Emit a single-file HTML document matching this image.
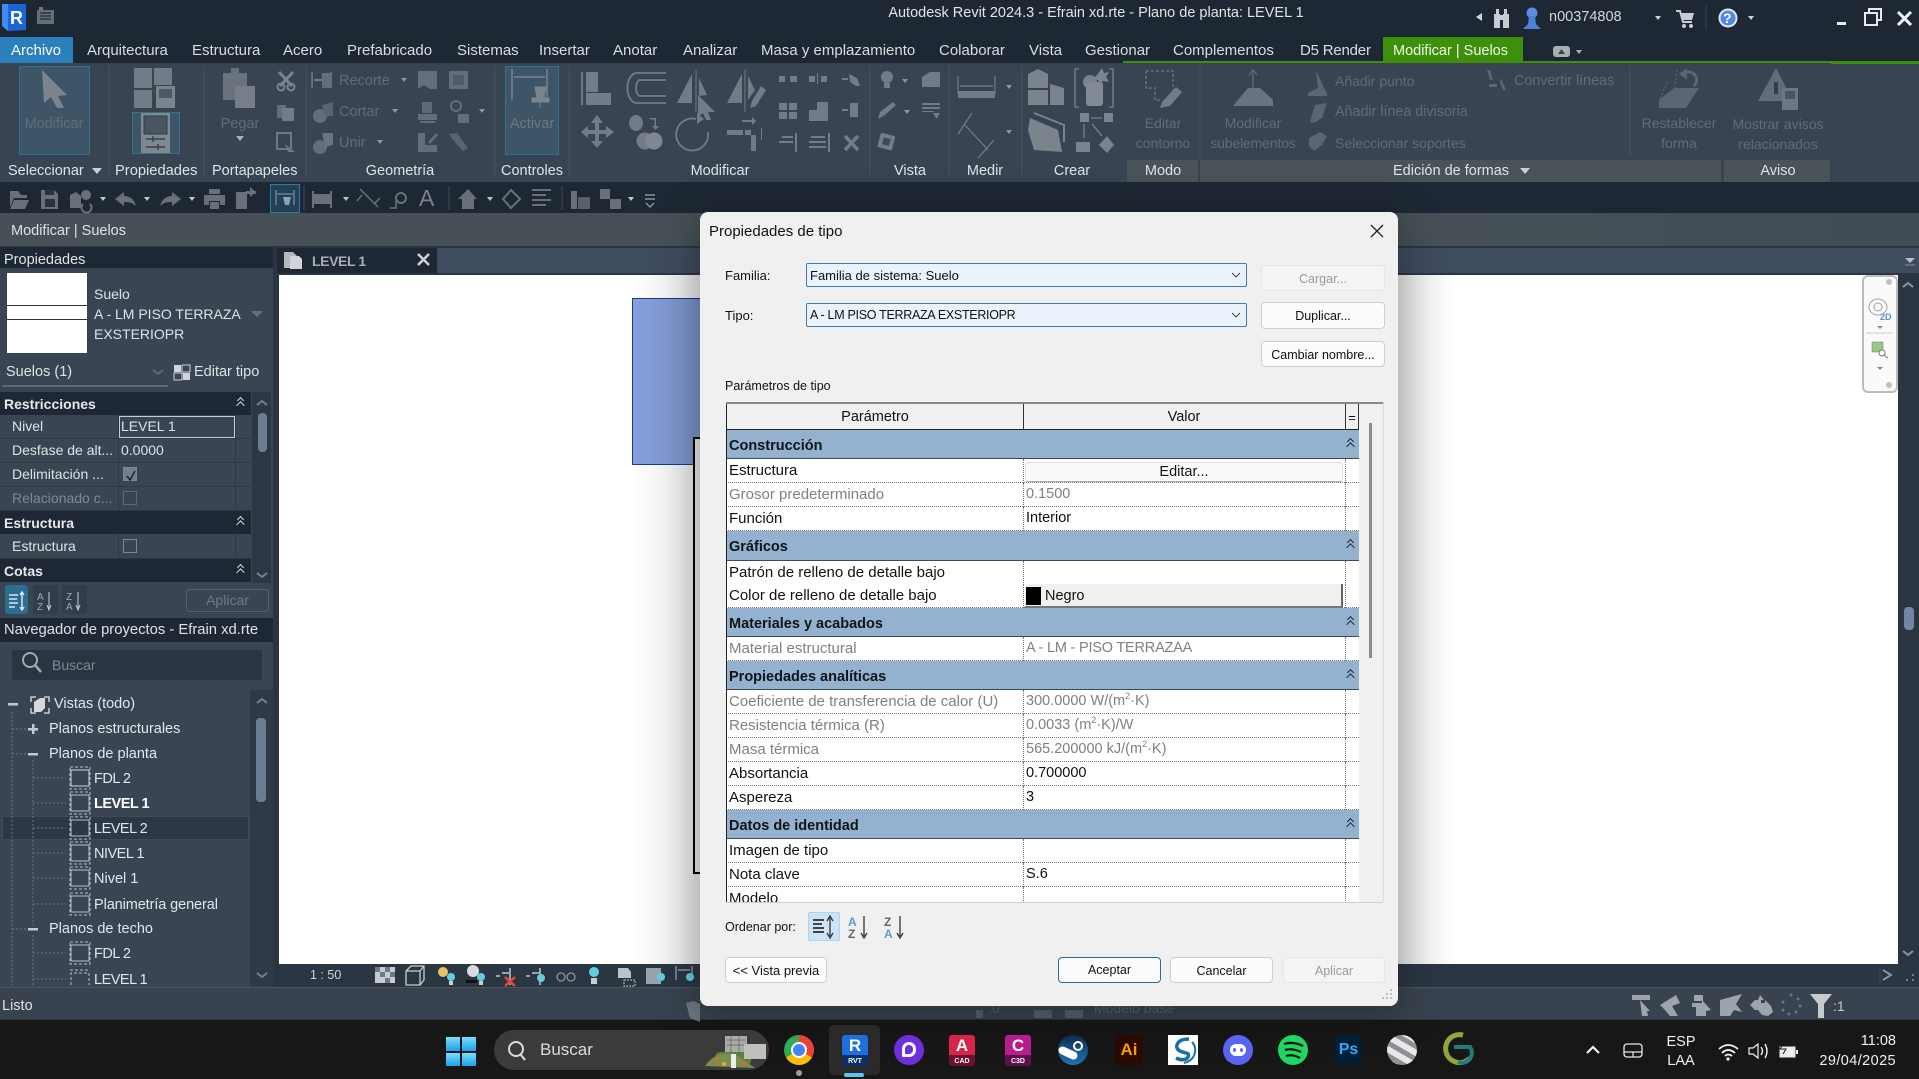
<!DOCTYPE html>
<html lang="es"><head><meta charset="utf-8"><title>Autodesk Revit</title>
<style>
*{box-sizing:border-box}
html,body{margin:0;padding:0;width:1919px;height:1079px;overflow:hidden;background:#1e2834;font-family:"Liberation Sans",sans-serif;color:#e6e8ea}
.b{position:absolute}
.t{position:absolute;white-space:nowrap;height:20px;line-height:20px;font-size:14px}
.c{transform:translateX(-50%)}
.m{font-size:15px;color:#d9dde0}
.d{color:#616c78}
.l{color:#dfe2e4;font-size:14.5px}
svg{position:absolute;left:0;top:0}
#dlg{position:absolute;left:700px;top:212px;width:698px;height:794px;background:#f0f0f0;border-radius:8px;box-shadow:0 6px 40px 4px rgba(0,0,0,.3);color:#000;overflow:hidden}
#dlg .t{font-size:13px;color:#111}
.btn{position:absolute;background:#fbfbfb;border:1px solid #cfcfcf;border-radius:4px;text-align:center;font-size:12.5px;color:#111;white-space:nowrap}
.dis{background:#f4f4f4;border-color:#e6e6e6;color:#9a9a9a}
.cb{position:absolute;left:106px;width:441px;height:24px;border:1px solid #3d7eab;border-radius:2px;background:#eaf3fb;font-size:13px;line-height:23px;padding-left:3px;color:#111}
.g{position:absolute;left:26px;width:633px;background:#94b2cf;border-bottom:1px solid #3e4b57;font-weight:bold;font-size:14.5px;padding:8px 0 0 3px;line-height:17px;color:#101418}
.g i,.ph i{position:absolute;right:6px;top:9px;width:5px;height:5px;border-left:1.5px solid #222;border-top:1.5px solid #222;transform:rotate(45deg)}
.g i:after,.ph i:after{content:"";position:absolute;left:1.5px;top:1.5px;width:5px;height:5px;border-left:1.5px solid #222;border-top:1.5px solid #222}
.r{position:absolute;left:26px;width:633px;height:24px;background:#fff;border-bottom:1px dotted #777;font-size:15px;line-height:23px;color:#111}
.r s{position:absolute;text-decoration:none;left:3px;top:0;white-space:nowrap}
.r u{position:absolute;text-decoration:none;left:300px;top:0;white-space:nowrap;font-size:14.5px}
.r:after{content:"";position:absolute;left:297px;top:0;bottom:-1px;border-left:1px dotted #777}
.r:before{content:"";position:absolute;left:619px;top:0;bottom:-1px;border-left:1px dotted #777}
.gr{color:#808080}
sup{font-size:9px;line-height:0}
.p{position:absolute;left:0;width:251px;height:24px;background:#3a4554;border-bottom:1px solid #2e3845;font-size:14px;line-height:23px;color:#dfe2e4}
.p s{position:absolute;text-decoration:none;left:12px;white-space:nowrap}
.p u{position:absolute;text-decoration:none;left:121px;white-space:nowrap}
.p:after{content:"";position:absolute;left:118px;top:0;bottom:0;border-left:1px solid #2e3845}
.p:before{content:"";position:absolute;left:235px;top:0;bottom:0;border-left:1px solid #2e3845}
.ph{position:absolute;left:0;width:251px;height:23px;background:#1e2834;font-weight:bold;font-size:14px;line-height:24px;padding-left:4px;color:#e6e8ea}
.ph i{left:238px;right:auto;top:6px;border-color:#dfe2e4}
.ph i:after{border-color:#dfe2e4}
.ck{position:absolute;left:123px;top:4px;width:14px;height:14px;border:1px solid #7d8793}
.tr{position:absolute;font-size:14.5px;height:20px;line-height:20px;color:#e3e6e8;white-space:nowrap}
.cap{letter-spacing:-.5px}
.ti{position:absolute;width:30px;height:30px;top:1035px;text-align:center;font-weight:bold}
</style></head><body>

<!-- BASE REGIONS -->
<div class="b" style="left:0;top:0;width:1919px;height:62px;background:#1e2834"></div>
<div class="b" style="left:0;top:37px;width:73px;height:26px;background:#2a7fbd"></div>
<div class="b" style="left:1383px;top:37px;width:140px;height:26px;background:#3c9109"></div>
<div class="b" style="left:1123px;top:61px;width:796px;height:3px;background:#3c9109"></div>
<div class="b" style="left:0;top:63px;width:1831px;height:119px;background:#394453"></div>
<div class="b" style="left:1831px;top:64px;width:88px;height:118px;background:#394453"></div>
<div class="b" style="left:1127px;top:160px;width:71px;height:22px;background:#495358"></div>
<div class="b" style="left:1200px;top:160px;width:521px;height:22px;background:#495358"></div>
<div class="b" style="left:1724px;top:160px;width:106px;height:22px;background:#495358"></div>
<div class="b" style="left:0;top:182px;width:1919px;height:31px;background:#1e2834"></div>
<div class="b" style="left:0;top:213px;width:1919px;height:33px;background:linear-gradient(90deg,#465056 0,#465056 75%,#3f4c55 100%)"></div>
<div class="b" style="left:0;top:246px;width:1919px;height:742px;background:#2b3542"></div>
<!-- tab strip -->
<div class="b" style="left:277px;top:248px;width:1642px;height:25px;background:#3f4b5e"></div>
<div class="b" style="left:277px;top:248px;width:160px;height:25px;background:#1e2834"></div>
<!-- canvas -->
<div class="b" style="left:279px;top:275px;width:1619px;height:689px;background:#fff"></div>
<div class="b" style="left:632px;top:298px;width:90px;height:167px;background:#86a0dc;border:1px solid #1d3a8f"></div>
<div class="b" style="left:693px;top:437px;width:40px;height:437px;background:#fff;border:2px solid #000"></div>
<!-- view bar -->
<div class="b" style="left:279px;top:964px;width:1619px;height:22px;background:#2b3643"></div>
<div class="b" style="left:1898px;top:964px;width:21px;height:22px;background:#2b3643"></div>
<!-- status bar -->
<div class="b" style="left:0;top:987px;width:1919px;height:33px;background:#39434f;border-top:1px solid #4a5563;border-bottom:1px solid #2a323c"></div>
<!-- taskbar -->
<div class="b" style="left:0;top:1020px;width:1919px;height:59px;background:#171717"></div>
<!-- scroll right -->
<div class="b" style="left:1904px;top:607px;width:10px;height:23px;background:#7286a3;border-radius:4px"></div>

<!-- LEFT PANEL -->
<div class="b" style="left:0;top:247px;width:273px;height:740px;background:#3a4554"></div>
<div class="b" style="left:0;top:247px;width:273px;height:21px;background:#1e2834"></div>
<div class="t" style="left:4px;top:250px;color:#dfe2e4;font-size:14.5px">Propiedades</div>
<div class="b" style="left:7px;top:273px;width:80px;height:80px;background:#fff"></div>
<div class="b" style="left:7px;top:305px;width:80px;height:1px;background:#333"></div>
<div class="b" style="left:7px;top:319px;width:80px;height:1px;background:#333"></div>
<div class="t l" style="left:94px;top:284px;font-size:14px">Suelo</div>
<div class="t l" style="left:94px;top:304px;font-size:14px">A - LM PISO TERRAZA</div>
<div class="t l" style="left:94px;top:324px;font-size:14px">EXSTERIOPR</div>
<div class="t" style="left:6px;top:362px;color:#dfe2e4;font-size:14.5px">Suelos (1)</div>
<div class="b" style="left:2px;top:385px;width:166px;height:2px;background:#5b6776"></div>
<div class="t" style="left:194px;top:362px;color:#dfe2e4;font-size:14.5px">Editar tipo</div>

<div class="ph" style="top:392px">Restricciones<i></i></div>
<div class="p" style="top:415px"><s>Nivel</s><u>LEVEL 1</u></div>
<div class="b" style="left:119px;top:416px;width:116px;height:22px;border:1px solid #c8ccd0"></div>
<div class="p" style="top:439px"><s>Desfase de alt...</s><u>0.0000</u></div>
<div class="p" style="top:463px"><s>Delimitación ...</s><span class="ck" style="background:#76808c"></span></div>
<div class="p" style="top:487px"><s style="color:#7f8893">Relacionado c...</s><span class="ck" style="border-color:#5d6875"></span></div>
<div class="ph" style="top:511px">Estructura<i></i></div>
<div class="p" style="top:535px"><s>Estructura</s><span class="ck"></span></div>
<div class="ph" style="top:559px">Cotas<i></i></div>
<div class="b" style="left:252px;top:392px;width:19px;height:191px;background:#2d3744"></div>
<div class="b" style="left:258px;top:413px;width:9px;height:39px;background:#6b7c94;border-radius:4px"></div>
<div class="b" style="left:5px;top:585px;width:23px;height:29px;background:#2c6d92;border-radius:3px"></div>
<div class="b" style="left:33px;top:585px;width:25px;height:29px;background:#323d4b"></div>
<div class="b" style="left:62px;top:585px;width:25px;height:29px;background:#323d4b"></div>
<div class="b" style="left:186px;top:589px;width:83px;height:23px;border:1px solid #55606d;border-radius:4px;text-align:center;font-size:14px;line-height:21px;color:#6f7985">Aplicar</div>

<div class="b" style="left:0;top:618px;width:273px;height:24px;background:#1e2834"></div>
<div class="t" style="left:4px;top:620px;color:#dfe2e4;font-size:14.8px">Navegador de proyectos - Efrain xd.rte</div>
<div class="b" style="left:12px;top:650px;width:250px;height:30px;background:#2b3541"></div>
<div class="t" style="left:52px;top:655px;color:#7f8893;font-size:14px">Buscar</div>
<div class="b" style="left:250px;top:690px;width:23px;height:297px;background:#2f3a47"></div>
<div class="b" style="left:256px;top:718px;width:10px;height:84px;background:#6b7c94;border-radius:4px"></div>
<div class="b" style="left:2px;top:816px;width:247px;height:24px;background:#2d3846;border:1px solid #3f4a58"></div>
<div class="b" style="left:0;top:690px;width:250px;height:296px;overflow:hidden">
 <div class="tr" style="left:54px;top:4px">Vistas (todo)</div>
 <div class="tr" style="left:49px;top:29px">Planos estructurales</div>
 <div class="tr" style="left:49px;top:54px">Planos de planta</div>
 <div class="tr cap" style="left:94px;top:79px">FDL 2</div>
 <div class="tr cap" style="left:94px;top:104px;font-weight:bold;color:#fff">LEVEL 1</div>
 <div class="tr cap" style="left:94px;top:129px">LEVEL 2</div>
 <div class="tr cap" style="left:94px;top:154px">NIVEL 1</div>
 <div class="tr" style="left:94px;top:179px">Nivel 1</div>
 <div class="tr" style="left:94px;top:205px;letter-spacing:-.1px">Planimetría general</div>
 <div class="tr" style="left:49px;top:229px">Planos de techo</div>
 <div class="tr cap" style="left:94px;top:254px">FDL 2</div>
 <div class="tr cap" style="left:94px;top:280px">LEVEL 1</div>
</div>

<!-- ICON LAYER -->
<svg width="1919" height="1079" viewBox="0 0 1919 1079">
<!-- title icons -->
<path d="M2 4H26V30L8 31L2 26Z" fill="#1a66d8"/><path d="M2 4H8V31L2 26Z" fill="#3f8cf0"/>
<text x="10" y="24" font-family="Liberation Sans,sans-serif" font-size="18" font-weight="bold" fill="#fff">R</text>
<rect x="37" y="10" width="17" height="14" fill="#666e78"/><rect x="39" y="7" width="4" height="3" fill="#777"/><path d="M40 13H51M40 16H51M40 19H51" stroke="#2b333d" stroke-width="1.500"/>
<!-- panels separators -->
<g stroke="#475261" stroke-width="1"><path d="M109 66V178M204 66V178M306 66V178M495 66V178M569 66V178M870 66V178M949 66V178M1022 66V178M1200 66V158M1630 66V156"/></g>
<!-- Modificar btn -->
<rect x="19.500" y="66.500" width="70" height="88" fill="#3e5568" stroke="#2f7292"/>
<path d="M42 70L67 95L58 96L64 108L57 108L51 97L44 103Z" fill="#7b838d"/>
<g fill="#737b86">
<rect x="134" y="68" width="18" height="20"/><rect x="154" y="68" width="18" height="17"/><rect x="134" y="90" width="18" height="18"/>
<rect x="156" y="86" width="19" height="22" fill="#7b838d"/><rect x="159" y="89" width="13" height="9" fill="#4d5865"/>
</g>
<rect x="132.500" y="112.500" width="47" height="41" fill="#3e5568" stroke="#2f7292"/>
<rect x="141" y="113" width="29" height="40" fill="#7f8791"/><rect x="144" y="116" width="23" height="18" fill="#4a5563" stroke="#333d48"/>
<path d="M146 139H165M146 147H165M153 136V142M158 144V150" stroke="#39434f" stroke-width="1.500"/>
<!-- Pegar -->
<path d="M223 73H231V68H239V73H247V86H255V108H235V100H223Z" fill="#6a727d"/><path d="M235 86H255V108H235Z" fill="#767e88"/>
<path d="M236 136H244L240 141Z" fill="#aab0b6"/>
<!-- scissors, copy, etc -->
<path d="M279 72L292 86M293 72L280 86" stroke="#7b838d" stroke-width="3"/><circle cx="281" cy="87" r="3.500" fill="none" stroke="#7b838d" stroke-width="2"/><circle cx="291" cy="87" r="3.500" fill="none" stroke="#7b838d" stroke-width="2"/>
<rect x="277" y="105" width="9" height="13" fill="#656d78"/><rect x="282" y="108" width="12" height="13" fill="#737b86"/>
<rect x="277" y="133" width="14" height="16" fill="none" stroke="#6f7782" stroke-width="2"/><path d="M285 144L295 152L288 152Z" fill="#6f7782"/>
<!-- Geometria -->
<path d="M312 72V88M331 72V88" stroke="#656d78" stroke-width="2"/><rect x="322" y="73" width="10" height="15" fill="#656d78"/><path d="M314 80H322" stroke="#737b86" stroke-width="2"/>
<path d="M418 71H437V89H430L424 85L418 89Z" fill="#656d78"/>
<rect x="449" y="71" width="19" height="18" fill="#656d78"/><rect x="453" y="75" width="11" height="10" fill="#515c69"/>
<circle cx="320" cy="116" r="7" fill="#656d78"/><path d="M322 105L333 102V116L325 116Z" fill="#5a636e"/>
<circle cx="320" cy="147" r="7" fill="#656d78"/><path d="M322 133H333V145L325 147Z" fill="#6b737e"/>
<rect x="418" y="114" width="19" height="6" fill="#656d78"/><path d="M422 102H432V113H422Z" fill="#5f6873"/><path d="M420 122H435" stroke="#656d78" stroke-width="2"/>
<circle cx="456" cy="106" r="5" fill="none" stroke="#656d78" stroke-width="2"/><rect x="458" y="114" width="11" height="9" fill="#656d78"/>
<path d="M418 133H425V145H437V152H418Z" fill="#656d78"/><path d="M428 142L436 133L438 135L430 144Z" fill="#656d78"/>
<path d="M449 134L457 133L468 148L463 151L453 140Z" fill="#5a636e"/>
<g fill="#8e959d"><path d="M401 78H407L404 82Z"/><path d="M392 109H398L395 113Z"/><path d="M377 140H383L380 144Z"/><path d="M479 109H485L482 113Z"/></g>
<!-- Activar -->
<rect x="505.500" y="66.500" width="53" height="88" fill="#3e5568" stroke="#2f7292"/>
<path d="M512 69V100M547 69V100M514 77H545" stroke="#778390" stroke-width="1.500"/>
<path d="M535 87H546L544 98H549V102H532V98H537ZM540 102V108" fill="#7b858f" stroke="#7b858f"/>
<!-- Modify col -->
<g fill="#737b86" stroke="none">
<path d="M581 72H583V105H581Z"/><rect x="586" y="72" width="12" height="20"/><rect x="586" y="93" width="25" height="12"/>
<path d="M677 103L692 74V103Z"/><rect x="695.500" y="70" width="1" height="42"/><path d="M699 78L707 95L699 96Z"/><path d="M698 95L715 112L708 112L711 120L706 120L703 113L698 117Z"/>
<path d="M727 103L742 74V103Z"/><rect x="744.500" y="70" width="1" height="42"/><path d="M748 76L755 90L748 100Z"/><path d="M752 101L761 86L766 90L756 106L750 108Z"/>
<path d="M597 115L603 123H599V130H606V126L614 132L606 138V134H599V141H603L597 148L591 141H595V134H588V138L581 132L588 126V130H595V123H591Z"/>
<ellipse cx="636" cy="123" rx="7" ry="8"/><circle cx="645" cy="141" r="8.500"/><circle cx="654" cy="141" r="8.500" fill="#808891"/>
<path d="M650 118H656V126L659 126L655.500 130L652 126H654.500V119.500H650Z"/>
<rect x="727" y="130" width="16" height="5"/><rect x="745" y="130" width="6" height="5"/><rect x="751" y="135" width="5" height="16"/>
<path d="M742 120H752V117L756 121L752 125V122H742Z"/>
<rect x="761" y="128" width="1" height="12"/>
<g><rect x="779" y="76" width="6" height="6"/><rect x="790" y="76" width="7" height="6"/><rect x="809" y="76" width="6" height="6"/><rect x="821" y="76" width="6" height="6"/><rect x="817" y="73" width="1" height="11"/>
<rect x="779" y="103" width="8" height="7"/><rect x="789" y="103" width="8" height="7"/><rect x="779" y="112" width="8" height="7"/><rect x="789" y="112" width="8" height="7"/>
<path d="M809 102H828V121H809V110H817V102Z"/>
<rect x="842" y="109" width="6" height="2"/><rect x="850" y="103" width="8" height="14"/>
<rect x="842" y="78" width="6" height="2"/><path d="M849 74L857 78L860 86L856 86L850 82Z"/>
<rect x="795" y="133" width="2" height="19"/><rect x="779" y="141" width="14" height="2"/><rect x="782" y="136" width="11" height="2"/>
<rect x="828" y="133" width="2" height="19"/><rect x="809" y="141" width="17" height="2"/><rect x="809" y="146" width="17" height="2"/><rect x="811" y="136" width="14" height="2"/></g>
<path d="M845 136L858 150M858 136L845 150" stroke="#737b86" stroke-width="3.500"/>
</g>
<path d="M666 73H637A9 14 0 0 0 637 103H666M666 80H640A4 8 0 0 0 640 96H666" fill="none" stroke="#737b86" stroke-width="1.800"/>
<path d="M700 117A16 16 0 1 0 712 130" fill="none" stroke="#737b86" stroke-width="1.800" transform="translate(-4 2)"/><path d="M697 113L704 119L697 124Z" fill="#737b86"/>
<!-- Vista -->
<g fill="#737b86">
<circle cx="887" cy="77" r="6"/><rect x="884" y="83" width="6" height="5"/>
<path d="M922 77L930 72H940V87H922Z"/>
<path d="M893 102L896 105L885 115L878 119L880 112Z"/>
<rect x="922" y="103" width="18" height="2"/><rect x="922" y="107" width="18" height="2"/><rect x="922" y="111" width="12" height="1"/><path d="M933 113H940L936.500 119Z"/>
<rect x="879" y="134" width="15" height="15" rx="2" transform="rotate(15 886 141)"/><rect x="883" y="138" width="7" height="7" fill="#3e4957" transform="rotate(15 886 141)"/>
</g>
<g fill="#8e959d"><path d="M902 79H908L905 83Z"/><path d="M904 110H910L907 114Z"/><path d="M1006 85H1012L1009 89Z"/><path d="M1006 130H1012L1009 134Z"/></g>
<!-- Medir -->
<g stroke="#737b86" fill="none"><path d="M958 76V94M995 76V94M960 86H993" stroke-width="1.200"/><path d="M964 124L988 150M972 113L958 134M994 140L978 158" stroke-width="1.200"/></g>
<rect x="958" y="91" width="37" height="7" fill="#737b86"/>
<!-- Crear -->
<g fill="#7b838d">
<path d="M1028 74L1038 69L1048 74V88H1028Z"/><path d="M1050 84L1064 88V105H1050Z"/><path d="M1028 90H1048V105H1028Z"/>
<path d="M1030 118L1058 130L1062 152L1034 150L1028 130Z"/><path d="M1034 113L1064 125V142" fill="none" stroke="#7b838d" stroke-width="2"/>
<circle cx="1090" cy="82" r="7"/><rect x="1086" y="82" width="17" height="24" rx="3" fill="#828a94"/><path d="M1102 68L1104 73L1109 72L1106 77L1109 82L1103 81L1100 85L1098 80L1093 79L1097 75Z"/>
<rect x="1080" y="113" width="9" height="9"/><rect x="1104" y="113" width="9" height="9"/><rect x="1076" y="142" width="14" height="10"/><path d="M1107 136L1114 145L1107 153L1099 145Z"/>
</g>
<path d="M1079 69H1075V107H1079M1109 69H1113V107H1109M1091 118H1102M1084 124V138M1092 124L1102 136" stroke="#7b838d" fill="none" stroke-width="1.300"/>
<!-- Editar contorno -->
<path d="M1146 71H1173V92M1146 71V88H1155V100H1160" fill="none" stroke="#66707c" stroke-width="1.500" stroke-dasharray="3 2"/>
<path d="M1162 102L1176 87L1182 92L1170 106L1160 108Z" fill="#737b86"/>
<!-- Modif sub -->
<path d="M1253 70V102M1249 75L1253 70L1257 75" stroke="#6a7380" fill="none"/><path d="M1233 106L1248 88H1260L1273 100V106Z" fill="#6a7380"/>
<g fill="#5c6672">
<path d="M1308 93L1318 88L1316 70L1324 88L1327 93V96H1308Z"/>
<path d="M1310 122L1315 105L1327 103L1322 118L1314 123Z"/>
<path d="M1309 138L1320 132L1327 136L1322 145L1314 151L1309 146Z"/>
<path d="M1487 70H1490L1493 80H1490ZM1501 78L1506 90H1503L1500 82ZM1489 84H1497V87H1489Z"/>
<!-- restablecer -->
<path d="M1659 100L1674 88H1699L1686 108H1659Z"/>
<path d="M1667 82L1660 100M1677 70L1675 88" stroke="#5c6672" stroke-dasharray="2 2"/>
<path d="M1694 86A8 8 0 1 0 1683 74" fill="none" stroke="#5c6672" stroke-width="3"/><path d="M1687 68L1679 74L1687 80Z"/>
<!-- aviso -->
<path d="M1776 68L1793 101H1758Z" fill="#636d79"/><rect x="1774" y="82" width="4" height="12" fill="#343e4b"/>
<rect x="1782" y="88" width="16" height="22" fill="#6d7682"/><rect x="1785" y="91" width="10" height="8" fill="#4a5563"/>
</g>
<!-- captions carets -->
<path d="M92 168H102L97 174Z" fill="#ccd0d4"/><path d="M1520 168H1530L1525 174Z" fill="#ccd0d4"/>
<!-- QAT -->
<g fill="#697079">
<path d="M10 191H18L21 195H27V198H14L10 207Z"/><path d="M14 200H29L25 209H10Z"/>
<path d="M41 190H54L58 194V209H41Z"/><rect x="45" y="190" width="9" height="5" fill="#2a3340"/><rect x="45" y="199" width="10" height="8" fill="#2a3340"/>
<path d="M70 195L76 192L81 196V208H70Z"/><circle cx="86" cy="195" r="5"/><path d="M83 204A5 5 0 1 0 90 204" fill="none" stroke="#697079" stroke-width="2"/>
<path d="M115 199L124 192V196C130 196 134 199 136 206C132 202 128 202 124 202V206Z"/>
<path d="M181 199L172 192V196C166 196 162 199 160 206C164 202 168 202 172 202V206Z"/>
<rect x="209" y="189" width="11" height="5"/><path d="M204 195H225V205H220V201H209V205H204Z"/><rect x="210" y="202" width="9" height="7"/>
<path d="M236 192H247V209H236Z"/><path d="M246 191H256V194H246ZM250 187L256 192L250 197Z"/>
<path d="M312 191V208H314V204H330V208H332V191H330V194H314V191Z"/><rect x="314" y="198" width="16" height="5"/>
<path d="M360 189L378 207M362 195L357 201M374 204L380 198" stroke="#697079" stroke-width="1.500" fill="none"/>
<circle cx="401" cy="198" r="5" fill="none" stroke="#697079" stroke-width="2"/><path d="M390 208H396V200" fill="none" stroke="#697079" stroke-width="1.500"/>
<path d="M458 199L468 189L477 199H474V209H462V199Z"/>
<path d="M511 190L520 199L511 208L503 199Z" fill="none" stroke="#697079" stroke-width="2"/>
<path d="M532 190H551M532 195H546M532 200H551M532 205H546" stroke="#697079" stroke-width="2"/>
<rect x="571" y="191" width="6" height="18"/><rect x="578" y="197" width="12" height="12" fill="#596069"/><rect x="600" y="189" width="10" height="10"/><rect x="610" y="199" width="11" height="10"/>
<path d="M645 195H655M645 199H655M646 203L650 207L654 203" stroke="#8c939b" fill="none" stroke-width="1.500"/>
</g>
<g fill="#c2c6cb"><path d="M100 197H106L103 201Z"/><path d="M144 197H150L147 201Z"/><path d="M189 197H195L192 201Z"/><path d="M343 197H349L346 201Z"/><path d="M487 197H493L490 201Z"/><path d="M628 197H634L631 201Z"/></g>
<rect x="270.500" y="184.500" width="29" height="28" fill="#244057" stroke="#2c7aa6"/>
<path d="M276 190V205M294 190V205M277 194H293" stroke="#8fa2b3"/><path d="M283 197H291L289 205H285Z" fill="#8fa2b3"/>
<path d="M304 186V210M449 186V210M562 186V210" stroke="#3e4958"/>
<!-- top right -->
<path d="M1482 13V21L1476 17Z" fill="#d0d4d8"/>
<g fill="#c8ccd0"><rect x="1494" y="14" width="6" height="14"/><rect x="1503" y="14" width="6" height="14"/><rect x="1496" y="9" width="3" height="5"/><rect x="1504" y="9" width="3" height="5"/><rect x="1499" y="15" width="5" height="5"/></g>
<circle cx="1532" cy="13" r="5.500" fill="#5a8de0"/><path d="M1529 16H1535L1536 24L1541 29H1523L1528 24Z" fill="#4f80d8"/>
<path d="M1655 16H1661L1658 20Z" fill="#d0d4d8"/>
<path d="M1676 11H1680L1683 22H1692" fill="none" stroke="#c8ccd0" stroke-width="2"/><path d="M1681 13H1694L1692 20H1683Z" fill="#c8ccd0"/><circle cx="1684" cy="26" r="2" fill="#c8ccd0"/><circle cx="1691" cy="26" r="2" fill="#c8ccd0"/>
<path d="M1706 5V30" stroke="#3b4653"/>
<circle cx="1728" cy="18" r="9.500" fill="#dfe8f6"/><circle cx="1728" cy="18" r="7.500" fill="#4f8ae4"/>
<path d="M1748 16H1754L1751 20Z" fill="#d0d4d8"/>
<rect x="1837" y="22" width="9" height="3" fill="#e8eaec"/>
<path d="M1869 12V9H1881V20H1877M1865 13H1877V25H1865Z" fill="none" stroke="#e8eaec" stroke-width="2"/>
<path d="M1898 12L1911 25M1911 12L1898 25" stroke="#f2f3f4" stroke-width="3"/>
<rect x="1553" y="46" width="17" height="11" rx="3" fill="#a9aeb3"/><path d="M1558 54H1565L1561.500 49Z" fill="#39434f"/><path d="M1576 50H1582L1579 54Z" fill="#a9aeb3"/>
<!-- panel glyphs -->
<path d="M251 292H263L257 298Z" fill="#66707d" transform="translate(0 19)"/>
<path d="M153 370L158 374L163 370" fill="none" stroke="#667180" stroke-width="1.500"/>
<g fill="#d0d4d8"><rect x="174" y="365" width="7" height="7"/><rect x="182" y="365" width="8" height="7" fill="none" stroke="#d0d4d8"/><rect x="174" y="373" width="8" height="7" fill="none" stroke="#d0d4d8"/><rect x="183" y="373" width="7" height="7"/></g>
<path d="M257 405L262 401L267 405M257 573L262 577L267 573" stroke="#74808f" fill="none" stroke-width="2"/>
<path d="M127 476L130 480L135 471" stroke="#222" fill="none" stroke-width="1.500"/>
<g stroke="#dbe3ea" stroke-width="1.500" fill="none"><path d="M9 595H18M9 599H17M9 603H18M9 607H15M22 593V609M20 595L22 592L24 595M20 607L22 610L24 607"/></g>
<g font-family="Liberation Sans,sans-serif" font-size="10" fill="#a0a8b1"><text x="37" y="600">A</text><text x="37" y="610">Z</text><text x="66" y="600">Z</text><text x="66" y="610">A</text></g>
<path d="M49 592V608M47 605L49 610L51 605M78 592V608M76 605L78 610L80 605" stroke="#c8cdd2" fill="none"/>
<circle cx="30" cy="660" r="7" fill="none" stroke="#a0a8b1" stroke-width="2"/><path d="M35 665L41 672" stroke="#a0a8b1" stroke-width="2.500"/>
<!-- tree -->
<g stroke="#6a7584" stroke-dasharray="2 2"><path d="M12 712V985M12 729H28M12 754H28M33 760V925M33 778H66M33 803H66M33 828H66M33 853H66M33 878H66M33 904H66M12 929H28M33 935V985M33 953H66M33 979H66"/></g>
<g fill="#c4c9ce"><rect x="8" y="703" width="10" height="2.500"/><rect x="28" y="728" width="10" height="2.500"/><rect x="32" y="724" width="2.500" height="10"/><rect x="28" y="753" width="10" height="2.500"/><rect x="28" y="928" width="10" height="2.500"/></g>
<path d="M31 702V697H36M44 697H49V702M49 708V713H44M36 713H31V708" stroke="#ccc" fill="none" stroke-width="1.500"/><path d="M34 702L40 698H45V708L41 712H34Z" fill="#d6d9dc"/>
<g fill="none" stroke="#b8bdc3" stroke-width="1"><rect x="71" y="770" width="18" height="16" stroke-width="1.200"/><path d="M70 767H90V789H70Z" stroke-dasharray="3 2"/>
<g transform="translate(0 25)"><rect x="71" y="770" width="18" height="16"/><path d="M70 767H90V789H70Z" stroke-dasharray="3 2"/></g>
<g transform="translate(0 50)"><rect x="71" y="770" width="18" height="16"/><path d="M70 767H90V789H70Z" stroke-dasharray="3 2"/></g>
<g transform="translate(0 75)"><rect x="71" y="770" width="18" height="16"/><path d="M70 767H90V789H70Z" stroke-dasharray="3 2"/></g>
<g transform="translate(0 100)"><rect x="71" y="770" width="18" height="16"/><path d="M70 767H90V789H70Z" stroke-dasharray="3 2"/></g>
<g transform="translate(0 126)"><rect x="71" y="770" width="18" height="16"/><path d="M70 767H90V789H70Z" stroke-dasharray="3 2"/></g>
<g transform="translate(0 175)"><rect x="71" y="770" width="18" height="16"/><path d="M70 767H90V789H70Z" stroke-dasharray="3 2"/></g>
<path d="M71 985V973H89V985M70 970H90" stroke-dasharray="3 2"/></g>
<path d="M257 703L262 699L267 703M257 973L262 977L267 973" stroke="#74808f" fill="none" stroke-width="2"/>
<rect x="250" y="986" width="23" height="1" fill="#39434f"/>
<!-- doc tab icon -->
<path d="M284 252H293L297 256V268H284Z" fill="#b5b9bd"/><path d="M290 256H299L302 259V269H290Z" fill="#d2d5d8"/>
<path d="M418 254L429 265M429 254L418 265" stroke="#d0d3d6" stroke-width="2.500"/>
<path d="M1905 258H1915L1910 263Z" fill="#b7bdc5"/><path d="M1905 265H1915" stroke="#b7bdc5" opacity=".6"/>
<!-- nav bar -->
<rect x="1863" y="276" width="34" height="116" rx="5" fill="#fafafa" stroke="#bcbcbc" stroke-width="2"/>
<circle cx="1889" cy="282" r="3" fill="#c0c0c0"/><circle cx="1889" cy="385" r="3" fill="#c0c0c0"/>
<ellipse cx="1878" cy="307" rx="9" ry="8" fill="none" stroke="#a0a0a0"/><circle cx="1878" cy="307" r="4" fill="none" stroke="#a0a0a0"/>
<text x="1880" y="320" font-family="Liberation Sans,sans-serif" font-size="9" font-weight="bold" fill="#5c8fc7">2D</text>
<path d="M1877 326H1883L1880 329Z" fill="#888"/><path d="M1866 333H1893" stroke="#ccc"/>
<rect x="1872" y="342" width="11" height="10" fill="#98c882" stroke="#777" stroke-width=".5"/><circle cx="1882" cy="353" r="3" fill="#fff" stroke="#777"/><path d="M1884 355L1888 358" stroke="#777"/>
<path d="M1877 367H1883L1880 370Z" fill="#888"/>
<!-- scroll -->
<path d="M1903 287L1908 283L1913 287M1903 951L1908 955L1913 951" stroke="#8594a8" fill="none" stroke-width="2"/>
<path d="M1880 968V984" stroke="#3f4a58"/><path d="M1883 970L1891 975L1883 980" stroke="#8594a8" fill="none" stroke-width="2"/>
<g fill="#70808f"><rect x="1906" y="979" width="2" height="2"/><rect x="1912" y="979" width="2" height="2"/><rect x="1912" y="974" width="2" height="2"/></g>
<!-- viewbar icons -->
<rect x="375" y="967" width="20" height="16" fill="#c8ccd0"/><g fill="#6f7884"><rect x="375" y="967" width="5" height="5"/><rect x="385" y="967" width="5" height="5"/><rect x="380" y="972" width="5" height="5"/><rect x="390" y="972" width="5" height="5"/><rect x="385" y="978" width="5" height="5"/></g>
<path d="M406 971H420V985H406ZM406 971L411 966H424V980L420 985M420 971L424 966" fill="none" stroke="#c8ccd0" stroke-width="1.300"/>
<circle cx="443" cy="972" r="5" fill="#e7c05f"/><circle cx="451" cy="977" r="4" fill="#63cde0"/><rect x="449" y="981" width="4" height="4" fill="#ccc"/>
<circle cx="473" cy="971" r="6" fill="#d8dadd"/><rect x="466" y="980" width="11" height="3" fill="#111"/><circle cx="481" cy="977" r="4" fill="#63cde0"/><rect x="479" y="981" width="4" height="4" fill="#ccc"/>
<path d="M502 973H510M510 968V985M496 976H500" stroke="#9aa2ac" stroke-width="2" fill="none"/><path d="M505 977L515 986M515 977L505 986" stroke="#e24a3b" stroke-width="2.500"/>
<path d="M532 973H540M540 968V985M526 976H530" stroke="#9aa2ac" stroke-width="2" fill="none"/><circle cx="541" cy="978" r="4" fill="#63cde0"/>
<circle cx="561" cy="977" r="4" fill="none" stroke="#8d949d" stroke-width="1.300"/><circle cx="571" cy="977" r="4" fill="none" stroke="#8d949d" stroke-width="1.300"/>
<circle cx="594" cy="972" r="5" fill="#63cde0"/><rect x="591" y="978" width="6" height="6" fill="#ccc"/>
<path d="M618 968H628L631 972V978H618Z" fill="#bfc3c8"/><path d="M624 980H635V986H624Z" fill="none" stroke="#bfc3c8" stroke-dasharray="2 1"/>
<rect x="646" y="968" width="15" height="16" fill="#9aa2ac"/><circle cx="661" cy="977" r="4" fill="#63cde0"/>
<path d="M676 966V980M692 966V980M678 970H690" stroke="#c0c4c9" fill="none"/><circle cx="690" cy="977" r="4" fill="#63cde0"/>
<!-- status icons -->
<path d="M686 1003L694 1001L700 1004V1022L690 1018Z" fill="#6f7782"/>
<g fill="#57616d"><rect x="976" y="1010" width="7" height="8"/><rect x="1034" y="1010" width="18" height="8"/><rect x="1065" y="1010" width="18" height="8"/></g>
<g fill="#9ea4ab">
<rect x="1632" y="995" width="18" height="5"/><path d="M1640 1000L1650 1011L1647 1011L1648 1016L1642 1016Z"/>
<path d="M1660 1005L1676 995L1680 1003L1672 1006L1678 1016H1670L1664 1009Z"/>
<rect x="1694" y="995" width="9" height="6"/><rect x="1692" y="1003" width="12" height="4"/><path d="M1696 1007H1702V1016H1696ZM1702 1000L1711 1010L1706 1011V1016H1702Z"/>
<path d="M1720 1000L1742 994L1736 1004L1742 1012L1734 1010L1730 1016H1720Z"/>
<path d="M1760 995L1764 1000H1761V1003H1765V1000L1771 1006L1773 1012L1768 1016L1762 1015L1758 1010H1755L1750 1005L1755 1000H1758Z"/>
<path d="M1810 994H1832L1824 1004V1018H1818V1004Z" fill="#c7cbcf"/>
</g>
<g fill="#6c7682"><circle cx="1791" cy="995" r="1.500"/><circle cx="1798" cy="999" r="1.500"/><circle cx="1800" cy="1006" r="1.500"/><circle cx="1796" cy="1012" r="1.500"/><circle cx="1789" cy="1014" r="1.500"/><circle cx="1783" cy="1010" r="1.500"/><circle cx="1783" cy="1002" r="1.500"/></g>
</svg>

<!-- shadows on canvas -->
<div class="b" style="left:632px;top:275px;width:68px;height:689px;background:linear-gradient(90deg,rgba(0,0,0,0),rgba(0,0,0,.1))"></div>
<div class="b" style="left:1398px;top:275px;width:60px;height:689px;background:linear-gradient(90deg,rgba(0,0,0,.1),rgba(0,0,0,0))"></div>

<!-- MENU TEXT -->
<div class="t m" style="left:11px;top:41px;color:#fff">Archivo</div>
<div class="t m" style="left:87px;top:41px">Arquitectura</div>
<div class="t m" style="left:192px;top:41px">Estructura</div>
<div class="t m" style="left:283px;top:41px">Acero</div>
<div class="t m" style="left:347px;top:41px">Prefabricado</div>
<div class="t m" style="left:457px;top:41px">Sistemas</div>
<div class="t m" style="left:539px;top:41px">Insertar</div>
<div class="t m" style="left:613px;top:41px">Anotar</div>
<div class="t m" style="left:683px;top:41px">Analizar</div>
<div class="t m" style="left:761px;top:41px">Masa y emplazamiento</div>
<div class="t m" style="left:939px;top:41px">Colaborar</div>
<div class="t m" style="left:1029px;top:41px">Vista</div>
<div class="t m" style="left:1085px;top:41px">Gestionar</div>
<div class="t m" style="left:1173px;top:41px">Complementos</div>
<div class="t m" style="left:1300px;top:41px;letter-spacing:-.2px">D5 Render</div>
<div class="t m" style="left:1393px;top:41px;color:#f2f6ee;font-size:14.5px">Modificar | Suelos</div>
<div class="t" style="left:1096px;top:3px;font-size:14.5px;color:#e2e4e6;transform:translateX(-50%)">Autodesk Revit 2024.3 - Efrain xd.rte - Plano de planta: LEVEL 1</div>
<div class="t" style="left:1549px;top:7px;font-size:14.5px;color:#d4d7da">n00374808</div>
<div class="t" style="left:1723px;top:8px;font-weight:bold;font-size:14px;color:#fff">?</div>

<!-- RIBBON TEXT -->
<div class="t d c" style="left:54px;top:114px;font-size:14.500px">Modificar</div>
<div class="t d c" style="left:240px;top:114px;font-size:14.500px">Pegar</div>
<div class="t d" style="left:339px;top:71px;font-size:14.500px">Recorte</div>
<div class="t d" style="left:339px;top:102px;font-size:14.500px">Cortar</div>
<div class="t d" style="left:339px;top:133px;font-size:14.500px">Unir</div>
<div class="t d c" style="left:532px;top:114px;font-size:14.500px;color:#6a7683">Activar</div>
<div class="t d c" style="left:1163px;top:113px">Editar</div>
<div class="t d c" style="left:1163px;top:133px">contorno</div>
<div class="t d c" style="left:1253px;top:113px">Modificar</div>
<div class="t d c" style="left:1253px;top:133px;letter-spacing:-.15px">subelementos</div>
<div class="t d" style="left:1335px;top:71px">Añadir punto</div>
<div class="t d" style="left:1335px;top:102px;font-size:14.300px">Añadir línea divisoria</div>
<div class="t d" style="left:1335px;top:133px">Seleccionar soportes</div>
<div class="t d" style="left:1514px;top:71px;font-size:14.300px">Convertir líneas</div>
<div class="t d c" style="left:1679px;top:113px">Restablecer</div>
<div class="t d c" style="left:1679px;top:133px">forma</div>
<div class="t d c" style="left:1778px;top:114px">Mostrar avisos</div>
<div class="t d c" style="left:1778px;top:134px">relacionados</div>
<div class="t l" style="left:8px;top:161px">Seleccionar</div>
<div class="t l" style="left:115px;top:161px;font-size:14.700px">Propiedades</div>
<div class="t l" style="left:212px;top:161px">Portapapeles</div>
<div class="t l c" style="left:400px;top:161px">Geometría</div>
<div class="t l c" style="left:532px;top:161px">Controles</div>
<div class="t l c" style="left:720px;top:161px">Modificar</div>
<div class="t l c" style="left:910px;top:161px">Vista</div>
<div class="t l c" style="left:985px;top:161px">Medir</div>
<div class="t l c" style="left:1072px;top:161px">Crear</div>
<div class="t l c" style="left:1163px;top:161px">Modo</div>
<div class="t l" style="left:1393px;top:161px">Edición de formas</div>
<div class="t l c" style="left:1778px;top:161px">Aviso</div>
<div class="t" style="left:419px;top:188px;font-size:23px;color:#7a8189">A</div>
<div class="t l" style="left:11px;top:221px">Modificar | Suelos</div>
<div class="t" style="left:312px;top:251px;font-weight:bold;font-size:14px;color:#a8adb2;letter-spacing:-.4px">LEVEL 1</div>
<div class="t" style="left:310px;top:965px;font-size:12.5px;color:#cfd3d7">1 : 50</div>
<div class="t" style="left:2px;top:996px;font-size:14.5px;color:#dfe2e4">Listo</div>
<div class="t" style="left:1833px;top:996px;font-size:14px;color:#c7cbcf">:1</div>
<div class="t" style="left:1094px;top:998px;font-size:14px;color:#57616d">Modelo base</div>
<div class="t" style="left:988px;top:998px;font-size:14px;color:#57616d">:0</div>

<!-- DIALOG -->
<div id="dlg">
 <div class="t" style="left:9px;top:10px;font-size:15px">Propiedades de tipo</div>
 <svg width="698" height="794" viewBox="0 0 698 794"><path d="M671 13L683 25M683 13L671 25" stroke="#222" stroke-width="1.300"/></svg>
 <div class="t" style="left:25px;top:54px">Familia:</div>
 <div class="cb" style="top:51px">Familia de sistema: Suelo</div>
 <div class="t" style="left:25px;top:94px">Tipo:</div>
 <div class="cb" style="top:91px;font-size:12.5px;letter-spacing:-.3px">A - LM PISO TERRAZA EXSTERIOPR</div>
 <svg width="698" height="120" viewBox="0 0 698 120"><path d="M532 61L536 65L540 61M532 101L536 105L540 101" stroke="#444" fill="none"/></svg>
 <div class="btn dis" style="left:561px;top:53px;width:124px;height:26px;line-height:27px">Cargar...</div>
 <div class="btn" style="left:561px;top:90px;width:124px;height:27px;line-height:27px">Duplicar...</div>
 <div class="btn" style="left:561px;top:129px;width:124px;height:26px;line-height:26px">Cambiar nombre...</div>
 <div class="t" style="left:25px;top:164px;font-size:12.5px">Parámetros de tipo</div>

 <div class="b" style="left:26px;top:190px;width:657px;height:2px;background:#8a8a8a"></div>
 <div class="b" style="left:26px;top:192px;width:633px;height:26px;background:#f0f0f0;border-bottom:1px solid #222;border-left:1px solid #222"></div>
 <div class="b" style="left:323px;top:192px;width:1px;height:26px;background:#333"></div>
 <div class="b" style="left:645px;top:192px;width:1px;height:26px;background:#333"></div>
 <div class="b" style="left:658px;top:192px;width:1px;height:26px;background:#333"></div>
 <div class="t c" style="left:175px;top:195px;font-size:14.5px">Parámetro</div>
 <div class="t c" style="left:484px;top:195px;font-size:14.5px">Valor</div>
 <div class="t c" style="left:652px;top:196px">=</div>

 <div class="g" style="top:218px;height:29px">Construcción<i></i></div>
 <div class="r" style="top:247px"><s>Estructura</s></div>
 <div class="r" style="top:271px"><s class="gr">Grosor predeterminado</s><u class="gr">0.1500</u></div>
 <div class="r" style="top:295px"><s>Función</s><u>Interior</u></div>
 <div class="g" style="top:319px;height:30px">Gráficos<i></i></div>
 <div class="r" style="top:349px"><s>Patrón de relleno de detalle bajo</s></div>
 <div class="r" style="top:372px"><s>Color de relleno de detalle bajo</s></div>
 <div class="g" style="top:396px;height:29px">Materiales y acabados<i></i></div>
 <div class="r" style="top:425px"><s class="gr">Material estructural</s><u class="gr" style="letter-spacing:-.2px">A - LM - PISO TERRAZAA</u></div>
 <div class="g" style="top:449px;height:29px">Propiedades analíticas<i></i></div>
 <div class="r" style="top:478px"><s class="gr">Coeficiente de transferencia de calor (U)</s><u class="gr">300.0000 W/(m<sup>2</sup>·K)</u></div>
 <div class="r" style="top:502px"><s class="gr">Resistencia térmica (R)</s><u class="gr">0.0033 (m<sup>2</sup>·K)/W</u></div>
 <div class="r" style="top:526px"><s class="gr">Masa térmica</s><u class="gr">565.200000 kJ/(m<sup>2</sup>·K)</u></div>
 <div class="r" style="top:550px"><s>Absortancia</s><u>0.700000</u></div>
 <div class="r" style="top:574px"><s>Aspereza</s><u>3</u></div>
 <div class="g" style="top:598px;height:29px">Datos de identidad<i></i></div>
 <div class="r" style="top:627px"><s>Imagen de tipo</s></div>
 <div class="r" style="top:651px"><s>Nota clave</s><u>S.6</u></div>
 <div class="r" style="top:675px;height:15px;border-bottom:none;overflow:hidden"><s>Modelo</s></div>
 <div class="b" style="left:26px;top:430px;width:1px;height:260px;background:#222"></div>
 <div class="b" style="left:26px;top:192px;width:1px;height:240px;background:#222"></div>
 <div class="b" style="left:26px;top:690px;width:657px;height:1px;background:#d0d0d0"></div>
 <div class="b" style="left:683px;top:190px;width:1px;height:500px;background:#dcdcdc"></div>
 <div class="b" style="left:669px;top:211px;width:3px;height:235px;background:#8c8c8c"></div>

 <div class="btn" style="left:325px;top:250px;width:318px;height:20px;line-height:18px;font-size:14.5px;background:#fafafa;border-color:#ddd;border-bottom-color:#aaa;border-radius:3px">Editar...</div>
 <div class="b" style="left:325px;top:372px;width:318px;height:24px;background:#f0f0f0;border-right:2px solid #666;border-bottom:2px solid #777;font-size:14.5px;color:#111"><span class="b" style="left:1px;top:3px;width:15px;height:18px;background:#000"></span><span class="b" style="left:20px;top:4px">Negro</span></div>

 <div class="t" style="left:25px;top:705px;font-size:12.5px">Ordenar por:</div>
 <div class="b" style="left:108px;top:700px;width:32px;height:29px;background:#cce4f7;border:1px solid #b0d4ef;border-radius:2px"></div>
 <svg width="698" height="794" viewBox="0 0 698 794">
  <path d="M113 708H124M113 712H122M113 716H124M113 720H124" stroke="#444" stroke-width="2"/><path d="M130 706V724M127 709L130 704L133 709M127 721L130 726L133 721" stroke="#333" fill="none" stroke-width="1.300"/>
  <text x="148" y="714" font-family="Liberation Sans,sans-serif" font-size="12" font-weight="bold" fill="#5a9bd8">A</text><text x="148" y="726" font-family="Liberation Sans,sans-serif" font-size="12" font-weight="bold" fill="#666">Z</text><path d="M164 704V724M161 721L164 726L167 721" stroke="#333" fill="none" stroke-width="1.300"/>
  <text x="184" y="714" font-family="Liberation Sans,sans-serif" font-size="12" font-weight="bold" fill="#666">Z</text><text x="184" y="726" font-family="Liberation Sans,sans-serif" font-size="12" font-weight="bold" fill="#5a9bd8">A</text><path d="M200 704V724M197 721L200 726L203 721" stroke="#333" fill="none" stroke-width="1.300"/>
  <g fill="#bdbdbd"><rect x="690" y="785" width="2" height="2"/><rect x="686" y="785" width="2" height="2"/><rect x="690" y="781" width="2" height="2"/><rect x="682" y="785" width="2" height="2"/><rect x="686" y="781" width="2" height="2"/><rect x="690" y="777" width="2" height="2"/></g>
 </svg>
 <div class="btn" style="left:25px;top:745px;width:102px;height:26px;line-height:26px;font-size:13px">&lt;&lt; Vista previa</div>
 <div class="btn" style="left:358px;top:745px;width:103px;height:26px;line-height:25px;border:1.500px solid #1d6fa5">Aceptar</div>
 <div class="btn" style="left:470px;top:745px;width:103px;height:26px;line-height:26px">Cancelar</div>
 <div class="btn dis" style="left:583px;top:745px;width:102px;height:26px;line-height:26px">Aplicar</div>
</div>

<!-- TASKBAR -->
<svg width="1919" height="1079" viewBox="0 0 1919 1079">
<defs><linearGradient id="w" x1="0" y1="0" x2="0" y2="1"><stop offset="0" stop-color="#7fdcfb"/><stop offset="1" stop-color="#16a3ec"/></linearGradient></defs>
<g fill="url(#w)"><rect x="446" y="1037" width="14" height="14"/><rect x="462" y="1037" width="14" height="14"/><rect x="446" y="1053" width="14" height="13"/><rect x="462" y="1053" width="14" height="13"/></g>
<rect x="494" y="1030" width="275" height="40" rx="20" fill="#3b3b3b"/>
<circle cx="516" cy="1049" r="7" fill="none" stroke="#dcdcdc" stroke-width="2"/><path d="M521 1055L525 1060" stroke="#dcdcdc" stroke-width="2.200"/>
<rect x="725" y="1036" width="22" height="20" fill="#a9aca6"/><path d="M727 1040H745M727 1045H745M731 1036V1056M739 1036V1056" stroke="#70736c"/><rect x="715" y="1052" width="36" height="14" rx="5" fill="#5f7f3f"/><rect x="744" y="1044" width="22" height="15" fill="#bfc1ba"/><path d="M705 1066Q718 1048 738 1056L755 1068Z" fill="#7a8f4f"/><rect x="731" y="1054" width="5" height="14" fill="#ececec"/><circle cx="717" cy="1060" r="2" fill="#d9663c"/><circle cx="745" cy="1063" r="2" fill="#d9663c"/><circle cx="724" cy="1064" r="2" fill="#e2b13c"/>
<rect x="829" y="1025" width="51" height="50" rx="5" fill="#2a2a2a"/>
<rect x="844" y="1073" width="20" height="4" rx="2" fill="#5cc4f5"/><rect x="796" y="1070" width="6" height="6" rx="3" fill="#9d9d9d"/>
<path d="M1587 1053L1593 1047L1599 1053" stroke="#f0f0f0" fill="none" stroke-width="2.200"/>
<rect x="1624" y="1044" width="18" height="13" rx="3" fill="none" stroke="#e8e8e8" stroke-width="1.300"/><path d="M1624 1052H1642M1633 1052V1057" stroke="#e8e8e8" stroke-width="1.200"/>
<path d="M1719 1049Q1728 1041 1738 1049M1722 1053Q1728 1047 1735 1053M1725 1056Q1728 1053 1732 1056" stroke="#f0f0f0" fill="none" stroke-width="1.800"/><circle cx="1728" cy="1059" r="1.600" fill="#f0f0f0"/>
<path d="M1749 1048H1753L1758 1044V1058L1753 1054H1749Z" fill="none" stroke="#f0f0f0" stroke-width="1.200"/><path d="M1761 1047Q1764 1051 1761 1055M1765 1044Q1769 1051 1765 1058" stroke="#f0f0f0" fill="none" stroke-width="1.400"/>
<path d="M1780 1047H1795V1057H1780Z" fill="#ececec" stroke="#ececec"/><rect x="1796" y="1050" width="2" height="4" fill="#ececec"/><path d="M1785 1041L1780 1049H1786L1783 1054" stroke="#171717" fill="none" stroke-width="1"/>
</svg>
<div class="t" style="left:540px;top:1040px;font-size:17px;color:#dcdcdc">Buscar</div>
<div class="b" style="left:784px;top:1035px;width:30px;height:30px;border-radius:50%;background:conic-gradient(#ea4335 0 120deg,#fbbc05 120deg 240deg,#34a853 240deg 360deg)"></div>
<div class="b" style="left:791px;top:1042px;width:16px;height:16px;border-radius:50%;background:#4285f4;border:2px solid #fff"></div>
<div class="ti" style="left:842px;width:26px;height:31px;background:linear-gradient(#1e6fe0 0,#1e6fe0 65%,#0e2f66 65%);border-radius:3px;color:#fff;font-size:17px;line-height:22px">R<div style="font-size:7px;line-height:9px">RVT</div></div>
<div class="ti" style="left:894px;border-radius:50%;background:#6d2ee0"></div>
<div class="b" style="left:902px;top:1042px;width:14px;height:15px;border:3px solid #fff;border-radius:7px 7px 7px 1px"></div>
<div class="ti" style="left:949px;width:26px;height:31px;background:linear-gradient(#d8244a 0,#d8244a 65%,#6e1030 65%);border-radius:3px;color:#fff;font-size:17px;line-height:22px">A<div style="font-size:7px;line-height:9px">CAD</div></div>
<div class="ti" style="left:1005px;width:26px;height:31px;background:linear-gradient(#b91c8c 0,#b91c8c 65%,#5f0f50 65%);border-radius:3px;color:#fff;font-size:17px;line-height:22px">C<div style="font-size:7px;line-height:9px">C3D</div></div>
<div class="ti" style="left:1058px;border-radius:50%;background:linear-gradient(#0f2b52,#1b76b8)"></div>
<div class="b" style="left:1058px;top:1049px;width:20px;height:8px;background:#fff;border-radius:4px;transform:rotate(25deg)"></div>
<div class="b" style="left:1073px;top:1041px;width:10px;height:10px;border:2px solid #fff;border-radius:50%"></div>
<div class="ti" style="left:1115px;width:28px;background:#2a0a00;border-radius:3px;color:#ff9a00;font-size:17px;line-height:30px">Ai</div>
<div class="ti" style="left:1168px;background:#fff"></div>
<svg width="1919" height="1079" viewBox="0 0 1919 1079"><path d="M1189 1039C1176 1039 1174 1048 1180 1051C1186 1054 1190 1052 1188 1057C1186 1061 1180 1060 1176 1058" fill="none" stroke="#1a6fa8" stroke-width="3.500"/><path d="M1192 1042C1198 1048 1196 1060 1184 1063" fill="none" stroke="#1a6fa8" stroke-width="2"/></svg>
<div class="ti" style="left:1223px;border-radius:50%;background:#5865f2"></div>
<div class="b" style="left:1230px;top:1044px;width:16px;height:12px;background:#fff;border-radius:6px"></div>
<div class="b" style="left:1233px;top:1048px;width:3px;height:4px;background:#5865f2;border-radius:50%"></div>
<div class="b" style="left:1240px;top:1048px;width:3px;height:4px;background:#5865f2;border-radius:50%"></div>
<div class="ti" style="left:1278px;border-radius:50%;background:#1ed760"></div>
<svg width="1919" height="1079" viewBox="0 0 1919 1079"><path d="M1284 1044Q1293 1041 1303 1046M1285 1050Q1293 1048 1301 1052M1286 1056Q1293 1054 1300 1058" stroke="#111" stroke-width="2.200" fill="none"/></svg>
<div class="ti" style="left:1335px;width:27px;background:#001e36;border-radius:3px;color:#31a8ff;font-size:16px;line-height:30px">Ps</div>
<div class="ti" style="left:1387px;border-radius:50%;background:repeating-linear-gradient(30deg,#e8e8e8 0 6px,#8d9196 6px 11px)"></div>
<svg width="1919" height="1079" viewBox="0 0 1919 1079"><path d="M1463 1035A14 14 0 1 0 1470 1058" fill="none" stroke="#8fa83c" stroke-width="5"/><path d="M1454 1047H1470A10 10 0 0 1 1458 1062" fill="none" stroke="#1e7d7e" stroke-width="4"/></svg>
<div class="t c" style="left:1681px;top:1032px;font-size:14.500px;color:#f0f0f0">ESP</div>
<div class="t c" style="left:1681px;top:1051px;font-size:14.500px;color:#f0f0f0">LAA</div>
<div class="t" style="right:23px;top:1031px;font-size:14.500px;color:#f0f0f0">11:08</div>
<div class="t" style="right:23px;top:1051px;font-size:14.500px;color:#f0f0f0;letter-spacing:.4px">29/04/2025</div>
</body></html>
